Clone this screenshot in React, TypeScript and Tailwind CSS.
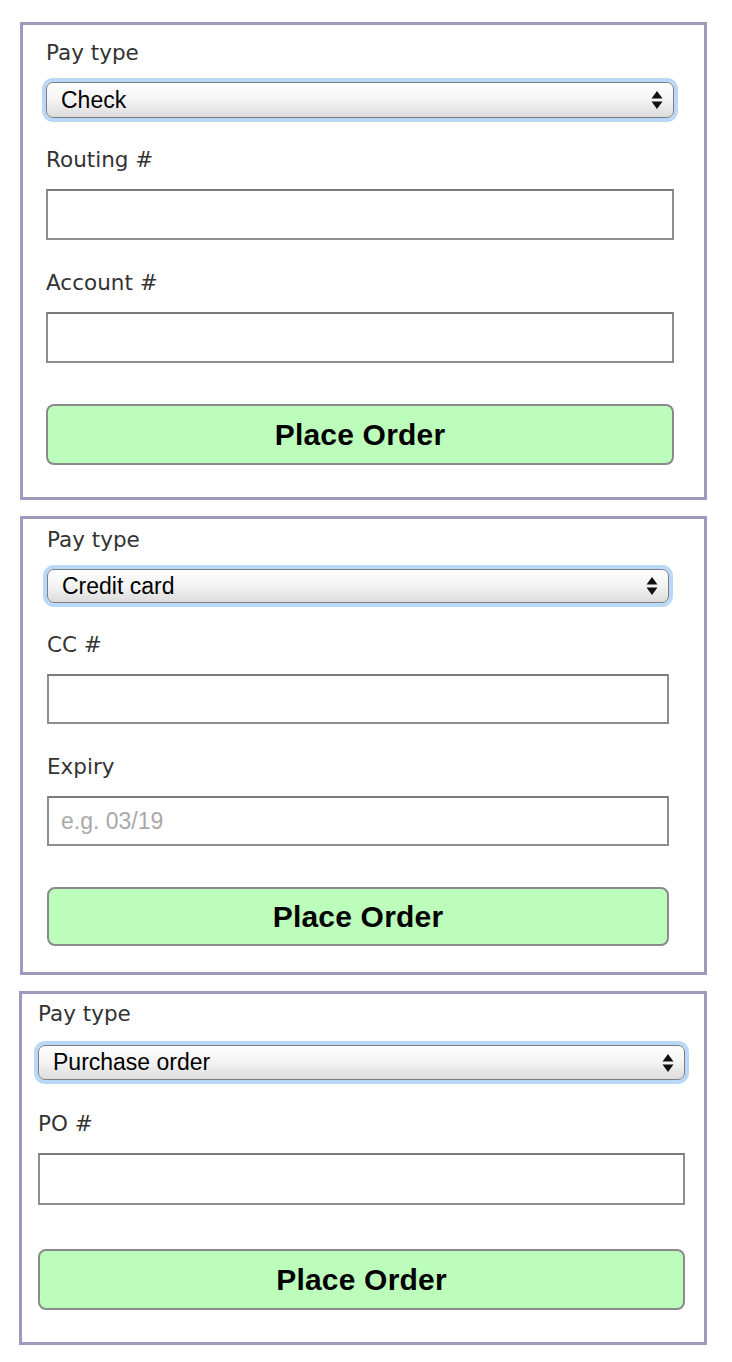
import type { ReactNode } from 'react'

const labelCls = "block h-6 text-[21.5px] leading-6 text-[#333] [font-family:'DejaVu_Sans',sans-serif]"

function Label({ children, className = '' }: { children: ReactNode; className?: string }) {
  return <div className={`${labelCls} ${className}`}>{children}</div>
}

function Arrows() {
  return (
    <svg width="12" height="20" viewBox="0 0 12 20" className="shrink-0">
      <path d="M6 1 L11.5 8.5 L0.5 8.5 Z" fill="#111" />
      <path d="M6 19 L11.5 11.5 L0.5 11.5 Z" fill="#111" />
    </svg>
  )
}

function Select({ value, className = '' }: { value: string; className?: string }) {
  return (
    <div
      className={`flex items-center justify-between rounded-[7px] border border-[#7d7d7d] bg-gradient-to-b from-white via-[#f3f3f3] to-[#dcdcdc] pl-[14px] pr-[10px] shadow-[0_0_0_4px_#b9d8f8] ${className}`}
    >
      <span className="text-[23px] leading-none text-black [font-family:'Liberation_Sans',Arial,sans-serif]">{value}</span>
      <Arrows />
    </div>
  )
}

function Input({ placeholder = '', className = '' }: { placeholder?: string; className?: string }) {
  return (
    <div className={`flex items-center border-2 border-[#8e8e8e] border-t-[#7a7a7a] bg-white px-3 ${className}`}>
      <span className="text-[23px] text-[#a9a9a9] [font-family:'Liberation_Sans',Arial,sans-serif]">{placeholder}</span>
    </div>
  )
}

function OrderButton({ className = '' }: { className?: string }) {
  return (
    <div
      className={`flex items-center justify-center rounded-[8px] border-2 border-[#8a8a8a] bg-[#bcfdbc] text-[30px] font-bold tracking-[0.2px] text-black [font-family:'Liberation_Sans',Arial,sans-serif] ${className}`}
    >
      Place Order
    </div>
  )
}

const panelCls = 'border-[3px] border-[#9d9abd] bg-white'

export default function App() {
  return (
    <div className="min-h-[1362px] bg-white pt-[22px]">
      {/* Check */}
      <section className={`${panelCls} ml-[20px] w-[687px] pt-[16px] pb-[32px] pl-[23px]`}>
        <div className="flex w-[628px] flex-col">
          <Label>Pay type</Label>
          <Select value="Check" className="mt-[17px] h-[36px]" />
          <Label className="mt-[30px]">Routing #</Label>
          <Input className="mt-[17px] h-[51px]" />
          <Label className="mt-[31px]">Account #</Label>
          <Input className="mt-[17px] h-[51px]" />
          <OrderButton className="mt-[41px] h-[61px]" />
        </div>
      </section>

      {/* Credit card */}
      <section className={`${panelCls} ml-[20px] mt-[16px] w-[687px] pt-[9px] pb-[26px] pl-[24px]`}>
        <div className="flex w-[622px] flex-col">
          <Label>Pay type</Label>
          <Select value="Credit card" className="mt-[17px] h-[34px]" />
          <Label className="mt-[30px]">CC #</Label>
          <Input className="mt-[17px] h-[50px]" />
          <Label className="mt-[31px]">Expiry</Label>
          <Input placeholder="e.g. 03/19" className="mt-[17px] h-[50px]" />
          <OrderButton className="mt-[41px] h-[59px]" />
        </div>
      </section>

      {/* Purchase order */}
      <section className={`${panelCls} ml-[19px] mt-[16px] w-[688px] pt-[8px] pb-[32px] pl-[16px]`}>
        <div className="flex w-[647px] flex-col">
          <Label>Pay type</Label>
          <Select value="Purchase order" className="mt-[19px] h-[35px]" />
          <Label className="mt-[32px]">PO #</Label>
          <Input className="mt-[17px] h-[52px]" />
          <OrderButton className="mt-[44px] h-[61px]" />
        </div>
      </section>
    </div>
  )
}
